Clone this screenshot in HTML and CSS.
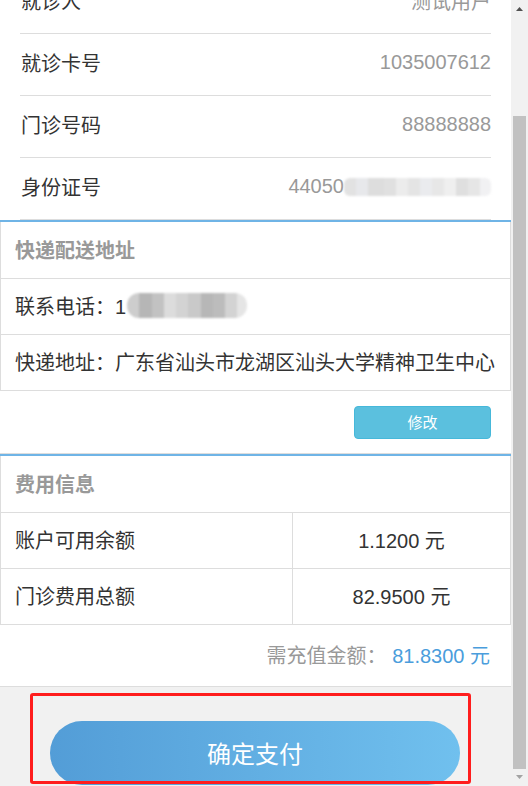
FILE: index.html
```html
<!DOCTYPE html>
<html lang="zh-CN">
<head>
<meta charset="utf-8">
<title>确定支付</title>
<link rel="stylesheet" href="styles.css">
</head>
<body>
<div class="screen">
  <main class="page">
    <section class="info">
      <div class="info-row"><span class="label">就诊人</span><span class="value">测试用户</span></div>
      <div class="info-row"><span class="label">就诊卡号</span><span class="value">1035007612</span></div>
      <div class="info-row"><span class="label">门诊号码</span><span class="value">88888888</span></div>
      <div class="info-row"><span class="label">身份证号</span><span class="value">44050<span class="blur blur-id"></span></span></div>
    </section>

    <section class="panel">
      <div class="box">
        <div class="panel-title">快递配送地址</div>
        <div class="panel-row">联系电话：1<span class="blur blur-phone"></span></div>
        <div class="panel-row">快递地址：广东省汕头市龙湖区汕头大学精神卫生中心</div>
      </div>
    </section>

    <div class="edit-bar"><button class="btn-edit" type="button">修改</button></div>

    <section class="panel">
      <div class="box">
        <div class="panel-title">费用信息</div>
        <div class="fee-row"><div class="fee-label">账户可用余额</div><div class="fee-value">1.1200 元</div></div>
        <div class="fee-row"><div class="fee-label">门诊费用总额</div><div class="fee-value">82.9500 元</div></div>
      </div>
    </section>

    <div class="recharge">需充值金额：&nbsp;<span class="amount">81.8300 元</span></div>

    <footer class="footer">
      <button class="btn-pay" type="button">确定支付</button>
      <div class="highlight"></div>
    </footer>
  </main>

  <div class="scrollbar">
    <div class="sb-btn"><svg width="7" height="4" viewBox="0 0 7 4"><polygon points="0,4 3.5,0 7,4" fill="#505050"/></svg></div>
    <div class="sb-thumb"></div>
    <div class="sb-btn sb-down"><svg width="7" height="4" viewBox="0 0 7 4"><polygon points="0,0 7,0 3.5,4" fill="#a3a3a3"/></svg></div>
  </div>
</div>
</body>
</html>
```

FILE: styles.css
```css
html, body {
  margin: 0;
  padding: 0;
  background: #fff;
}

body {
  font-family: "Liberation Sans", "Noto Sans CJK SC", sans-serif;
  font-size: 20px;
  color: #333;
}

.screen {
  display: flex;
  height: 786px;
  overflow: hidden;
}

.page {
  width: 511px;
  flex: none;
  overflow: hidden;
}

/* patient info */
.info {
  margin-top: -28px;
  padding: 0 20px;
}

.info-row {
  height: 62px;
  box-sizing: border-box;
  border-bottom: 1px solid #dddddd;
  display: flex;
  align-items: center;
  justify-content: space-between;
  padding: 0 0 4px 1px;
}

.label {
  color: #333;
}

.value {
  color: #999;
  display: flex;
  align-items: center;
}

.blur {
  display: inline-block;
  filter: blur(0.8px);
}

.blur-id {
  width: 147px;
  height: 18px;
  border-radius: 6px;
  background: linear-gradient(to right,
    #e2e2e2 0 12px, #e7e8eb 12px 24px, #dddddd 24px 40px, #e0e0e0 40px 52px,
    #ececec 52px 64px, #e4e4e4 64px 76px, #eaebee 76px 88px, #e7e7e7 88px 100px,
    #efefef 100px 112px, #dfdfdf 112px 124px, #e6e6e6 124px 136px, #f1f1f3 136px 147px);
}

.blur-phone {
  width: 120px;
  height: 25px;
  margin-left: 1px;
  border-radius: 12px;
  background: linear-gradient(to right,
    #cdcdcd 0 12px, #b6b6b6 12px 25px, #c2c2c2 25px 37px, #dcdcdc 37px 49px,
    #d3d3d3 49px 61px, #c9c9c9 61px 74px, #b7b7b7 74px 86px, #bcbcbc 86px 98px,
    #d3d3d3 98px 110px, #e5e5e5 110px 120px);
}

/* panels */
.panel {
  border-top: 2px solid #6fb4e6;
}

.box {
  border-left: 1px solid #dddddd;
  border-right: 1px solid #dddddd;
}

.panel-title {
  height: 57px;
  box-sizing: border-box;
  border-bottom: 1px solid #dddddd;
  display: flex;
  align-items: center;
  padding: 0 0 2px 14px;
  color: #999;
  font-weight: bold;
}

.panel-row {
  height: 56px;
  box-sizing: border-box;
  border-bottom: 1px solid #dddddd;
  display: flex;
  align-items: center;
  padding: 0 0 2px 14px;
  color: #333;
  white-space: nowrap;
}

.edit-bar {
  display: flex;
  justify-content: flex-end;
  padding: 15px 20px 14px 0;
  border-bottom: 1px solid #dddddd;
}

.btn-edit {
  width: 137px;
  height: 33px;
  box-sizing: border-box;
  border: 1px solid #46b8da;
  border-radius: 4px;
  background: #5bc0de;
  color: #fff;
  font-family: inherit;
  font-size: 15px;
  padding: 0 0 2px;
}

.fee-row {
  display: grid;
  grid-template-columns: 292px 1fr;
  height: 56px;
  box-sizing: border-box;
  border-bottom: 1px solid #dddddd;
}

.fee-label {
  display: flex;
  align-items: center;
  padding: 0 0 3px 14px;
  border-right: 1px solid #dddddd;
  color: #333;
}

.fee-value {
  display: flex;
  align-items: center;
  justify-content: center;
  padding-bottom: 3px;
  color: #333;
}

.recharge {
  height: 61px;
  box-sizing: border-box;
  display: flex;
  align-items: center;
  justify-content: flex-end;
  padding: 0 21px 3px 0;
  color: #999;
}

.amount {
  color: #4a9ddc;
}

/* footer */
.footer {
  position: relative;
  border-top: 1px solid #dddddd;
  background: #f1f1f1;
  padding: 34px 0 20px;
}

.btn-pay {
  display: block;
  width: 410px;
  height: 64px;
  margin: 0 0 0 50px;
  border: none;
  border-radius: 32px;
  background: linear-gradient(to right, #539dd7, #70c0ee);
  color: #fff;
  font-family: inherit;
  font-size: 24px;
  padding: 0 0 2px;
}

.highlight {
  position: absolute;
  top: 6px;
  left: 30px;
  width: 441px;
  height: 91px;
  box-sizing: border-box;
  border: 3px solid #ff1d1d;
  border-radius: 3px;
}

/* scrollbar */
.scrollbar {
  width: 17px;
  flex: none;
  background: #f1f1f1;
  display: flex;
  flex-direction: column;
  align-items: center;
}

.sb-btn {
  height: 17px;
  display: flex;
  align-items: center;
  justify-content: center;
}

.sb-btn svg {
  display: block;
}

.sb-thumb {
  width: 13px;
  height: 653px;
  margin-top: 99px;
  background: #c1c1c1;
}

.sb-down {
  height: 4px;
  margin-top: 6px;
}
```
